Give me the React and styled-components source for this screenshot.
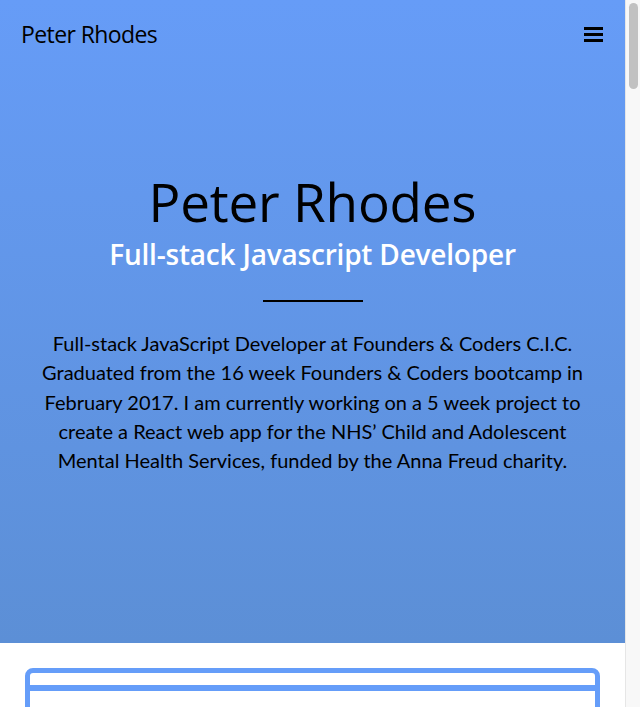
import React from "react";
import styled, { createGlobalStyle } from "styled-components";

const GlobalStyle = createGlobalStyle`
  html, body {
    margin: 0;
    padding: 0;
  }
  body {
    font-family: "Open Sans", "Noto Sans", sans-serif;
    background: #fff;
    overflow: hidden;
  }
`;

const Window = styled.div`
  display: flex;
  height: 100vh;
`;

const Page = styled.div`
  flex: 1;
  min-width: 0;
  overflow: hidden;
`;

const ScrollRail = styled.div`
  width: 15px;
  flex-shrink: 0;
  background: #f8f8f8;
  border-left: 1px solid #e6e6e6;
  box-sizing: border-box;
  padding: 3px 2px 0 3px;
`;

const ScrollThumb = styled.div`
  height: 86px;
  border-radius: 5px;
  background: #c1c1c1;
`;

const Hero = styled.header`
  background: linear-gradient(to bottom, #669cf7 0%, #5c8fd6 100%);
  height: 643px;
  display: flex;
  flex-direction: column;
`;

const Nav = styled.nav`
  display: flex;
  justify-content: space-between;
  align-items: center;
  padding: 16px 21px 0 21px;
  height: 36px;
`;

const Brand = styled.a`
  font-family: "Open Sans", sans-serif;
  font-size: 23px;
  letter-spacing: -0.6px;
  color: #000;
  text-decoration: none;
`;

const MenuButton = styled.button`
  background: none;
  border: none;
  padding: 0;
  margin-right: 1px;
  display: flex;
  flex-direction: column;
  gap: 3px;
  cursor: pointer;
`;

const MenuBar = styled.span`
  display: block;
  width: 19px;
  height: 3px;
  background: #000;
`;

const Intro = styled.div`
  display: flex;
  flex-direction: column;
  align-items: center;
  text-align: center;
  padding: 115px 30px 0;
`;

const Title = styled.h1`
  margin: 0;
  font-family: "Open Sans", sans-serif;
  font-weight: 400;
  font-size: 53px;
  line-height: 70px;
  letter-spacing: -0.2px;
  color: #000;
`;

const Subtitle = styled.h2`
  margin: 0;
  font-family: "Open Sans", sans-serif;
  font-weight: 600;
  font-size: 28px;
  line-height: 34px;
  letter-spacing: -0.2px;
  color: #fff;
`;

const Divider = styled.hr`
  width: 100px;
  border: none;
  border-top: 2px solid #000;
  margin: 29px 0 27px;
`;

const About = styled.p`
  margin: 0;
  font-family: "Lato", sans-serif;
  font-size: 20px;
  line-height: 29.3px;
  color: #000;
  max-width: 560px;
`;

const Projects = styled.section`
  padding: 25px 25px 40px;
`;

const Card = styled.div`
  border: 5px solid #659df9;
  border-radius: 8px;
  height: 300px;
  display: flex;
  flex-direction: column;
`;

const CardBar = styled.div`
  margin-top: 12px;
  height: 6px;
  background: #659df9;
`;

export default function App() {
  return (
    <>
      <GlobalStyle />
      <Window>
        <Page>
          <Hero>
            <Nav>
              <Brand href="#">Peter Rhodes</Brand>
              <MenuButton aria-label="menu">
                <MenuBar />
                <MenuBar />
                <MenuBar />
              </MenuButton>
            </Nav>
            <Intro>
              <Title>Peter Rhodes</Title>
              <Subtitle>Full-stack Javascript Developer</Subtitle>
              <Divider />
              <About>
                Full-stack JavaScript Developer at Founders &amp; Coders C.I.C.
                Graduated from the 16 week Founders &amp; Coders bootcamp in
                February 2017. I am currently working on a 5 week project to
                create a React web app for the NHS’ Child and Adolescent Mental
                Health Services, funded by the Anna Freud charity.
              </About>
            </Intro>
          </Hero>
          <Projects>
            <Card>
              <CardBar />
            </Card>
          </Projects>
        </Page>
        <ScrollRail>
          <ScrollThumb />
        </ScrollRail>
      </Window>
    </>
  );
}
